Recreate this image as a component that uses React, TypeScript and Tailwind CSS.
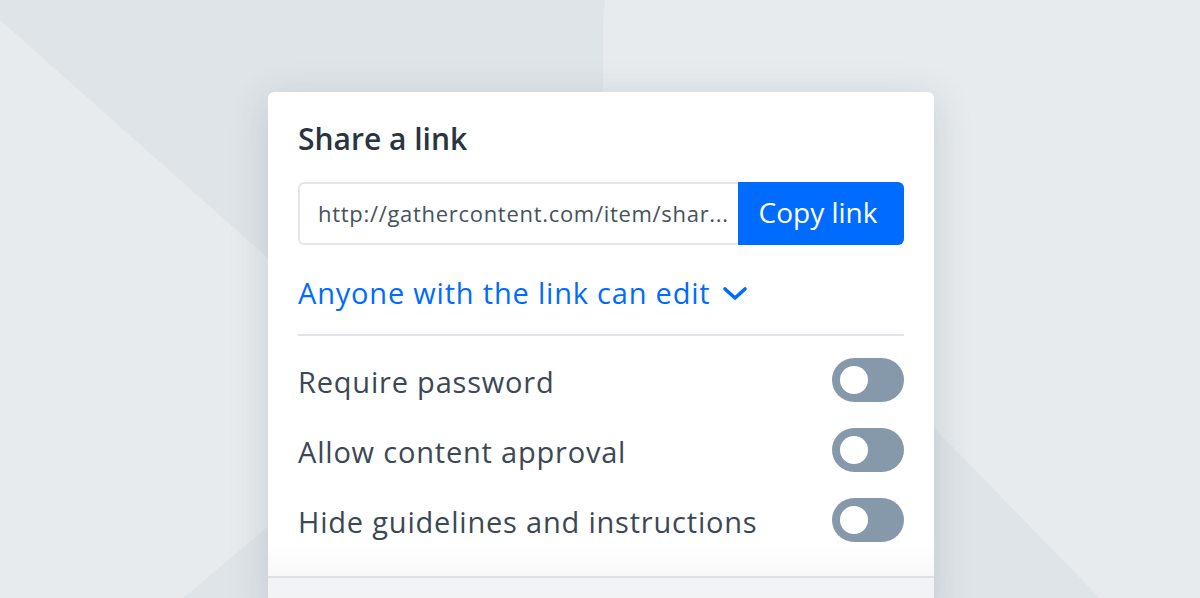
import { useState } from "react"

const options = [
  "Require password",
  "Allow content approval",
  "Hide guidelines and instructions",
]

function Toggle({ on, onClick }: { on: boolean; onClick: () => void }) {
  return (
    <button
      onClick={onClick}
      className={`flex h-[44px] w-[72px] shrink-0 items-center rounded-full px-[8px] ${on ? "justify-end bg-[#006cff]" : "justify-start bg-[#8699ab]"}`}
    >
      <span className="block h-[28px] w-[28px] rounded-full bg-white" />
    </button>
  )
}

export default function App() {
  const [toggles, setToggles] = useState([false, false, false])

  return (
    <div
      className="relative h-[598px] w-[1200px] overflow-hidden bg-[#dfe4e8]"
      style={{ fontFamily: '"Open Sans", "Noto Sans", sans-serif' }}
    >
      {/* background shapes */}
      <svg className="absolute inset-0" width="1200" height="598" viewBox="0 0 1200 598">
        <polygon points="0,20 700,642 0,642" fill="#e7ebee" />
        <rect x="603" y="-199" width="900" height="1000" rx="229" fill="#e7ebee" />
        <polygon points="686,173 1160,660 110,660" fill="#dfe4e8" />
      </svg>

      <div className="relative ml-[268px] mt-[92px] w-[666px] overflow-hidden rounded-t-[6px] bg-white shadow-[0_8px_40px_rgba(40,55,75,0.16)]">
        <div className="px-[30px] pt-[27px]">
          <h2 className="h-[40px] text-[30px] font-semibold leading-[40px] text-[#29353f]">Share a link</h2>

          {/* link field */}
          <div className="mt-[23px] flex h-[63px]">
            <div className="flex flex-1 items-center overflow-hidden whitespace-nowrap rounded-l-[6px] border-2 border-r-0 border-[#e3e7ea] pl-[18px] text-[22px] tracking-[0.7px] text-[#46525e]">
              http://gathercontent.com/item/shar...
            </div>
            <button className="w-[166px] pr-[6px] pb-[3px] rounded-r-[6px] bg-[#006cff] text-[28px] text-white">Copy link</button>
          </div>

          {/* permission dropdown */}
          <button className="mt-[28px] flex h-[40px] items-center gap-[10px] text-[29px] tracking-[0.8px] text-[#006cff]">
            Anyone with the link can edit
            <svg width="28" height="18" viewBox="0 0 28 18" fill="none">
              <path d="M4 5l10 9 10-9" stroke="#006cff" strokeWidth="3.6" strokeLinecap="round" strokeLinejoin="round" />
            </svg>
          </button>

          <div className="mt-[21px] h-[2px] bg-[#e1e5e9]" />

          {/* options */}
          <div className="mt-[22px] flex flex-col gap-[26px]">
            {options.map((label, i) => (
              <div key={label} className="flex h-[44px] items-center justify-between">
                <span className="pt-[4px] text-[29px] tracking-[0.8px] text-[#3b4856]">{label}</span>
                <Toggle
                  on={toggles[i]}
                  onClick={() => setToggles(toggles.map((t, j) => (j === i ? !t : t)))}
                />
              </div>
            ))}
          </div>
        </div>

        <div className="h-[34px] bg-gradient-to-b from-white to-[#f8f8f8]" />
        <div className="h-[40px] border-t-2 border-[#dde1e5] bg-[#f2f3f4]" />
      </div>
    </div>
  )
}
